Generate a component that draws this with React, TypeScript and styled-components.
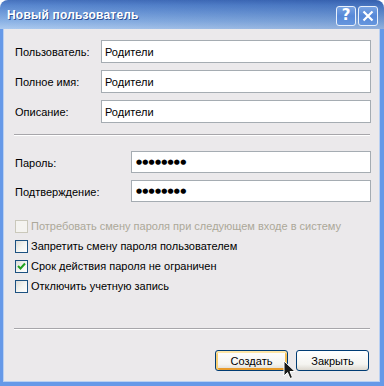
import React from "react";
import styled, { createGlobalStyle } from "styled-components";

const GlobalStyle = createGlobalStyle`
  html, body { margin: 0; padding: 0; background: #ffffff; }
  body { font-family: "Liberation Sans", Arial, sans-serif; font-size: 11px; color: #000; }
  * { box-sizing: border-box; }
`;

const Window = styled.div`
  position: relative;
  width: 384px;
  height: 386px;
  display: flex;
  flex-direction: column;
  border-radius: 8px 8px 0 0;
  overflow: hidden;
`;

const TitleBar = styled.div`
  height: 29px;
  flex: none;
  display: flex;
  align-items: center;
  justify-content: space-between;
  padding: 0 6px 0 7px;
  background:
    linear-gradient(90deg, rgba(255, 255, 255, 0.06) 0%, rgba(0, 20, 90, 0.12) 100%),
    linear-gradient(180deg, #3b69b9 0%, #4f80cc 18%, #6896d8 45%, #86afe4 75%, #a6c6ee 100%);
`;

const Title = styled.div`
  color: #ffffff;
  font-family: "Liberation Sans", Arial, sans-serif;
  font-weight: bold;
  font-size: 12px;
  letter-spacing: 0.2px;
  text-shadow: 1px 1px 0 #2a4f95;
  padding-top: 1px;
`;

const TitleButtons = styled.div`
  display: flex;
  gap: 2px;
  padding-top: 2px;
`;

const TitleButton = styled.div`
  width: 20px;
  height: 20px;
  border: 1px solid #e8f0fb;
  border-radius: 3px;
  background: linear-gradient(180deg, #78a3e2 0%, #5688d8 50%, #6696de 100%);
  display: flex;
  align-items: center;
  justify-content: center;
  color: #ffffff;
  font-family: "DejaVu Sans", sans-serif;
  font-weight: bold;
  font-size: 15px;
  line-height: 1;
`;

const Frame = styled.div`
  flex: 1;
  display: flex;
  padding: 0 4px 4px 3px;
  background: #6699e8;
`;

const Body = styled.div`
  flex: 1;
  display: flex;
  flex-direction: column;
  background: #ebe9eb;
  border: 1px solid #b9d0f2;
  border-top: none;
  padding: 11px 8px 10px 11px;
`;

const FieldGrid = styled.div<{ $labelWidth: number }>`
  display: grid;
  grid-template-columns: ${(p) => p.$labelWidth}px 1fr;
  row-gap: 7px;
  align-items: center;
`;

const Label = styled.div`
  padding-top: 1px;
  white-space: nowrap;
`;

const TextBox = styled.div<{ $h: number; $secret?: boolean }>`
  height: ${(p) => p.$h}px;
  border: 1px solid #a5acb2;
  background: #ffffff;
  display: flex;
  align-items: center;
  padding: 0 3px;
  font-family: ${(p) => (p.$secret ? '"DejaVu Sans", sans-serif' : '"Liberation Sans", Arial, sans-serif')};
  font-size: ${(p) => (p.$secret ? "7px" : "11px")};
  letter-spacing: ${(p) => (p.$secret ? "0.2px" : "0")};
  padding-left: ${(p) => (p.$secret ? "4px" : "3px")};
`;

const Separator = styled.div<{ $top: number; $bottom: number }>`
  height: 2px;
  margin: ${(p) => p.$top}px 1px ${(p) => p.$bottom}px -1px;
  border-top: 1px solid #a7a6aa;
  border-bottom: 1px solid #ffffff;
`;

const CheckList = styled.div`
  display: flex;
  flex-direction: column;
  margin-top: 14px;
`;

const CheckRow = styled.div<{ $disabled?: boolean }>`
  height: 20px;
  display: flex;
  align-items: center;
  gap: 3px;
  color: ${(p) => (p.$disabled ? "#aca899" : "#000000")};
`;

const Box = styled.div<{ $disabled?: boolean }>`
  width: 13px;
  height: 13px;
  flex: none;
  border: 1px solid ${(p) => (p.$disabled ? "#cac8bb" : "#1c5180")};
  background: ${(p) =>
    p.$disabled ? "#f4f3f0" : "linear-gradient(135deg, #dcdcd7 0%, #f4f4f0 50%, #ffffff 100%)"};
  display: flex;
  align-items: center;
  justify-content: center;
`;

const ButtonRow = styled.div`
  display: flex;
  justify-content: flex-end;
  gap: 8px;
  padding-right: 2px;
`;

const Button = styled.div<{ $default?: boolean }>`
  width: 73px;
  height: 21px;
  border: 1px solid #003c74;
  border-radius: 3px;
  background: linear-gradient(180deg, #ffffff 0%, #f4f4f0 70%, #dcd8cf 100%);
  display: flex;
  align-items: center;
  justify-content: center;
  box-shadow: ${(p) =>
    p.$default ? "inset 0 2px 0 #fde6a8, inset 2px 0 0 #f7cf75, inset -2px 0 0 #f2bd52, inset 0 -2px 0 #e89c2a" : "none"};
`;

const Cursor = styled.svg`
  position: absolute;
  left: 283px;
  top: 360px;
`;

const Check: React.FC<{ label: string; checked?: boolean; disabled?: boolean }> = ({ label, checked, disabled }) => (
  <CheckRow $disabled={disabled}>
    <Box $disabled={disabled}>
      {checked && (
        <svg width="9" height="9" viewBox="0 0 9 9">
          <path d="M1 4 L3.5 6.5 L8 1.5" fill="none" stroke="#21a121" strokeWidth="2" />
        </svg>
      )}
    </Box>
    {label}
  </CheckRow>
);

export default function App() {
  return (
    <>
      <GlobalStyle />
      <Window>
        <TitleBar>
          <Title>Новый пользователь</Title>
          <TitleButtons>
            <TitleButton>?</TitleButton>
            <TitleButton>
              <svg width="12" height="12" viewBox="0 0 12 12">
                <path d="M1.5 1.5 L10.5 10.5 M10.5 1.5 L1.5 10.5" stroke="#ffffff" strokeWidth="2.2" />
              </svg>
            </TitleButton>
          </TitleButtons>
        </TitleBar>
        <Frame>
          <Body>
            <FieldGrid $labelWidth={86}>
              <Label>Пользователь:</Label>
              <TextBox $h={23}>Родители</TextBox>
              <Label>Полное имя:</Label>
              <TextBox $h={23}>Родители</TextBox>
              <Label>Описание:</Label>
              <TextBox $h={23}>Родители</TextBox>
            </FieldGrid>
            <Separator $top={11} $bottom={15} />
            <FieldGrid $labelWidth={116}>
              <Label>Пароль:</Label>
              <TextBox $h={22} $secret>●●●●●●●●</TextBox>
              <Label>Подтверждение:</Label>
              <TextBox $h={22} $secret>●●●●●●●●</TextBox>
            </FieldGrid>
            <CheckList>
              <Check label="Потребовать смену пароля при следующем входе в систему" disabled />
              <Check label="Запретить смену пароля пользователем" />
              <Check label="Срок действия пароля не ограничен" checked />
              <Check label="Отключить учетную запись" />
            </CheckList>
            <Separator $top={32} $bottom={20} />
            <ButtonRow>
              <Button $default>Создать</Button>
              <Button>Закрыть</Button>
            </ButtonRow>
          </Body>
        </Frame>
        <Cursor width="13" height="21" viewBox="0 0 13 21">
          <path d="M1 1 L1 16 L4.5 12.5 L7 18.5 L9.5 17.5 L7 11.5 L12 11.5 Z" fill="#1a1a1a" stroke="#ffffff" strokeWidth="1" />
        </Cursor>
      </Window>
    </>
  );
}
